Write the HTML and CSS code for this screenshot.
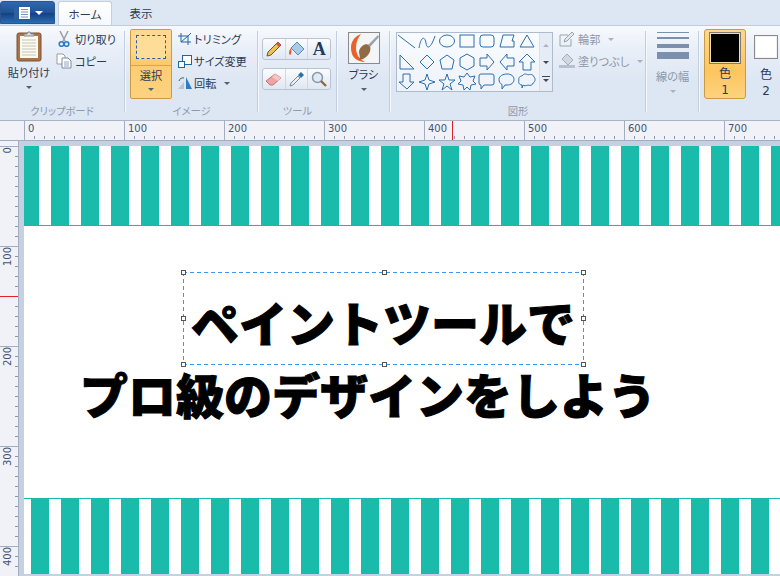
FILE: index.html
```html
<!DOCTYPE html>
<html lang="ja">
<head>
    <meta charset="UTF-8">
    <title>ペイント</title>
    <link rel="stylesheet" href="styles.css">
</head>
<body>
    <div class="tabs">
        <div class="app-button">
            <svg width="16" height="12" viewBox="0 0 16 12"><rect width="16" height="12" fill="#fff"/><rect x="0" y="0" width="5" height="12" fill="#2f5f9f"/><path d="M7 2.5h7M7 5h7M7 7.5h7M7 10h7" stroke="#7a93b8"/></svg>
            <span class="arrow white"></span>
        </div>
        <div class="tab active">ホーム</div>
        <div class="tab">表示</div>
    </div>

    <div class="ribbon">
        <div class="group g-clip">
            <div class="group-body">
                <div class="large paste">
                    <svg class="large-icon" width="32" height="32" viewBox="0 0 32 32">
                        <rect x="4" y="3" width="24" height="28" rx="2" fill="#a9744a" stroke="#7d5230"/>
                        <rect x="7" y="6" width="18" height="22" fill="#fdfaf0"/>
                        <path d="M9 10h14M9 13h14M9 16h14M9 19h14M9 22h14M9 25h14" stroke="#c4c4bc"/>
                        <path d="M11 6V4h3l1-2h2l1 2h3v2z" fill="#d9dde2" stroke="#808890"/>
                    </svg>
                    <span class="label">貼り付け</span>
                    <span class="arrow"></span>
                </div>
                <div class="small-col clip-col">
                    <div class="small-row">
                        <svg class="icon" width="16" height="16" viewBox="0 0 16 16"><path d="M4 0l5 10M12 0L7 10" stroke="#9aa3ad" stroke-width="1.6" fill="none"/><circle cx="5.500" cy="13" r="2.300" fill="none" stroke="#2b7cc4" stroke-width="1.600"/><circle cx="10.500" cy="13" r="2.300" fill="none" stroke="#2b7cc4" stroke-width="1.600"/></svg>
                        <span>切り取り</span>
                    </div>
                    <div class="small-row">
                        <svg class="icon" width="16" height="16" viewBox="0 0 16 16"><path d="M1 1h6l2 2v8H1z" fill="#fff" stroke="#9a9a9a"/><path d="M6 5h6l3 3v7H6z" fill="#fff" stroke="#7c8a9c"/><path d="M8 9h5M8 11h5M8 13h5" stroke="#8fa6c0"/></svg>
                        <span>コピー</span>
                    </div>
                </div>
            </div>
            <div class="group-label">クリップボード</div>
        </div>
        <div class="sep"></div>

        <div class="group g-image">
            <div class="group-body">
                <div class="large select-button">
                    <div class="select-top"><div class="dash-rect"></div></div>
                    <span class="label">選択</span>
                    <span class="arrow"></span>
                </div>
                <div class="small-col image-col">
                    <div class="small-row">
                        <svg class="icon" width="16" height="16" viewBox="0 0 16 16"><path d="M1 5h10v9M4 2v9h10M11 5l3-3M4 11l7-6" fill="none" stroke="#2463a6"/></svg>
                        <span>トリミング</span>
                    </div>
                    <div class="small-row">
                        <svg class="icon" width="16" height="16" viewBox="0 0 16 16"><rect x="5.500" y="2.500" width="9" height="9" fill="#fff" stroke="#2463a6"/><rect x="1.500" y="8.500" width="6" height="6" fill="#fff" stroke="#2463a6"/></svg>
                        <span>サイズ変更</span>
                    </div>
                    <div class="small-row">
                        <svg class="icon" width="16" height="16" viewBox="0 0 16 16"><path d="M1 14l6-7v7z" fill="#bcc3cc"/><path d="M9 14V2l6 12z" fill="#2f7cc4"/><path d="M2 6a4 4 0 0 1 5-3" fill="none" stroke="#2f6a3a"/></svg>
                        <span>回転</span>
                        <span class="arrow inline-arrow"></span>
                    </div>
                </div>
            </div>
            <div class="group-label">イメージ</div>
        </div>
        <div class="sep"></div>

        <div class="group g-tools">
            <div class="group-body">
                <div class="tool-grid">
                    <div class="tool-row">
                        <div class="tool"><svg width="18" height="18" viewBox="0 0 18 18"><path d="M3 12L13 2l3 3L6 15l-4 1z" fill="#f2c04c" stroke="#6a5a3a"/><path d="M13 2l3 3-2 2-3-3z" fill="#d9534f"/></svg></div>
                        <div class="tool"><svg width="18" height="18" viewBox="0 0 18 18"><path d="M9 2l7 7-6 6-7-7z" fill="#a8cbe8" stroke="#5b8ab5"/><path d="M3 8C0 11 1 15 2 15s2-3 1-7z" fill="#e8602c"/></svg></div>
                        <div class="tool"><span class="tool-a">A</span></div>
                    </div>
                    <div class="tool-row">
                        <div class="tool"><svg width="18" height="18" viewBox="0 0 18 18"><path d="M1 11l9-7 6 4-8 7H5z" fill="#f0a3a0" stroke="#b77a78"/><path d="M10 4l6 4-3 3-6-4z" fill="#f7c6c4"/></svg></div>
                        <div class="tool"><svg width="18" height="18" viewBox="0 0 18 18"><path d="M2 16l1-3 7-7 2 2-7 7z" fill="#e9eef4" stroke="#7d8a99"/><path d="M10 5l3-3 3 3-3 3z" fill="#2b6ea8"/></svg></div>
                        <div class="tool"><svg width="18" height="18" viewBox="0 0 18 18"><circle cx="7.500" cy="7.500" r="5" fill="#dfeaf4" stroke="#8a98a8" stroke-width="1.500"/><path d="M11 11l5 5" stroke="#8a6a48" stroke-width="2.400"/></svg></div>
                    </div>
                </div>
            </div>
            <div class="group-label">ツール</div>
        </div>
        <div class="sep"></div>

        <div class="group g-brush">
            <div class="group-body">
                <div class="large brush">
                    <svg class="large-icon brush-icon" width="32" height="32" viewBox="0 0 32 32">
                        <rect x="0.500" y="0.500" width="31" height="31" fill="#f4f5f6" stroke="#8a8a8a"/>
                        <path d="M13 2C5 5 1 12 4 22c2 6 9 8 13 8-6-3-9-8-9-14 0-6 2-10 5-14z" fill="#e8622a"/>
                        <path d="M11 19c2-6 7-8 10-6 3 3 1 9-3 12-2 2-5 3-7 3 2-2 0-5 0-9z" fill="#8f6a44"/>
                        <path d="M20 13L30 3l1 2-9 10z" fill="#9aa2ac"/>
                    </svg>
                    <span class="label">ブラシ</span>
                    <span class="arrow"></span>
                </div>
            </div>
        </div>
        <div class="sep"></div>

        <div class="group g-shapes">
            <div class="group-body">
                <div class="gallery">
                    <svg class="shape-list" width="142" height="58" viewBox="0 0 142 58">
                        <g fill="none" stroke="#2a6fae">
                            <path d="M1 2l17 13"/>
                            <path d="M22 15c2-12 6-12 7-5s5 5 9-7"/>
                            <ellipse cx="50" cy="8" rx="7.500" ry="6"/>
                            <rect x="63" y="2" width="14" height="12"/>
                            <rect x="83" y="2" width="14" height="12" rx="3"/>
                            <path d="M103 14l3-12h11l-2 6h2v6z"/>
                            <path d="M130 2l7 12h-14z"/>

                            <path d="M3 22l14 14H3z"/>
                            <path d="M30 22l7 7-7 7-7-7z"/>
                            <path d="M50 22l7 5-2 9H45l-2-9z"/>
                            <path d="M70 21l7 4v8l-7 4-7-4v-8z"/>
                            <path d="M83 25h7v-4l7 8-7 8v-4h-7z"/>
                            <path d="M117 25h-7v-4l-7 8 7 8v-4h7z"/>
                            <path d="M126 37v-8h-4l8-8 8 8h-4v8z"/>
                        </g>
                        <g fill="none" stroke="#2a6fae" transform="translate(0,-1)">
                            <path d="M6 42v8H2l8 7 7-7h-4v-8z"/>
                            <path d="M30 42l2 6 6 2-6 2-2 6-2-6-6-2 6-2z"/>
                            <path d="M50 42l2 6h6l-5 4 2 6-5-4-5 4 2-6-5-4h6z"/>
                            <path d="M70 41l3 4 5-1-2 5 3 3-5 1-1 5-3-3-3 3-1-5-5-1 3-3-2-5 5 1z"/>
                            <path d="M85 42h10a2 2 0 0 1 2 2v7a2 2 0 0 1-2 2h-8l-3 4v-4a2 2 0 0 1-2-2v-7a2 2 0 0 1 2-2z"/>
                            <path d="M110 42c4 0 7 2 7 5.500s-3 5.500-7 5.500h-2l-3 4v-4.500c-2-1-3-3-3-5 0-3.500 4-5.500 8-5.500z"/>
                            <path d="M125 44c2-3 5-2 6-1 2-1 5-1 6 2 2 2 1 5-1 6 0 2-3 3-5 2-2 1-4 1-5 0l-1 3v-3c-3 0-4-3-3-5-1-2 1-4 3-4z"/>
                        </g>
                    </svg>
                    <div class="gallery-scroll">
                        <span class="arrow up"></span>
                        <span class="arrow dark"></span>
                        <span class="arrow dark lined"></span>
                    </div>
                </div>
                <div class="small-col shape-col">
                    <div class="small-row muted">
                        <svg class="icon" width="16" height="16" viewBox="0 0 16 16"><path d="M1 4h8M1 4v11h11V8" fill="none" stroke="#9aa3b0"/><path d="M5 11l1-3 7-7 2 2-7 7z" fill="#e4e7ec" stroke="#9aa3b0"/></svg>
                        <span>輪郭</span>
                        <span class="arrow inline-arrow pale"></span>
                    </div>
                    <div class="small-row muted">
                        <svg class="icon" width="16" height="16" viewBox="0 0 16 16"><path d="M8 1l6 6-5 5-6-6z" fill="#d2d8e0" stroke="#a4acb8"/><path d="M0 12h16v3H0z" fill="#b8c0cc"/></svg>
                        <span>塗りつぶし</span>
                        <span class="arrow inline-arrow pale"></span>
                    </div>
                </div>
            </div>
            <div class="group-label">図形</div>
        </div>
        <div class="sep"></div>

        <div class="group g-size">
            <div class="group-body">
                <div class="large muted">
                    <div class="size-lines">
                        <i class="w1"></i>
                        <i class="w2"></i>
                        <i class="w4"></i>
                        <i class="w7"></i>
                    </div>
                    <span class="label">線の幅</span>
                    <span class="arrow pale"></span>
                </div>
            </div>
        </div>
        <div class="sep"></div>

        <div class="group g-color">
            <div class="group-body">
                <div class="large color-button on">
                    <div class="swatch black"></div>
                    <span class="label">色</span>
                    <span class="label num">1</span>
                </div>
                <div class="large color-button off">
                    <div class="swatch white"></div>
                    <span class="label">色</span>
                    <span class="label num">2</span>
                </div>
            </div>
        </div>
    </div>

    <div class="ruler-h">
        <span>0</span><span>100</span><span>200</span><span>300</span><span>400</span><span>500</span><span>600</span><span>700</span>
        <div class="mark-h"></div>
    </div>

    <div class="work">
        <div class="ruler-v">
            <span><b>0</b></span><span><b>100</b></span><span><b>200</b></span><span><b>300</b></span><span><b>400</b></span>
            <div class="mark-v"></div>
        </div>
        <div class="canvas-area">
            <div class="canvas">
                <div class="band band-top"></div>
                <div class="paper">
                    <div class="big line-one">ペイントツールで</div>
                    <div class="big line-two">プロ級のデザインをしよう</div>
                    <div class="selection">
                        <i class="handle h-tl"></i><i class="handle h-tm"></i><i class="handle h-tr"></i>
                        <i class="handle h-ml"></i><i class="handle h-mr"></i>
                        <i class="handle h-bl"></i><i class="handle h-bm"></i><i class="handle h-br"></i>
                    </div>
                </div>
                <div class="band band-bottom"></div>
            </div>
        </div>
    </div>
</body>
</html>
```

FILE: styles.css
```css
* {
    box-sizing: border-box;
}
body {
    margin: 0;
    width: 780px;
    height: 576px;
    overflow: hidden;
    background: #dfe7f3;
    color: #2c3a55;
    font-family: "Noto Sans CJK JP", "Noto Sans", sans-serif;
    font-size: 11.2px;
    font-feature-settings: "palt";
}

/* tabs */
.tabs {
    height: 25px;
    display: flex;
    align-items: flex-end;
    background: #dde6f3;
}
.app-button {
    width: 55px;
    height: 23px;
    margin-bottom: 1px;
    display: flex;
    align-items: center;
    justify-content: center;
    gap: 5px;
    padding-left: 2px;
    border: 1px solid #2b5590;
    border-radius: 3px 3px 0 0;
    background: linear-gradient(#2f68ad 0, #1f5396 50%, #13407f 52%, #2a6cb4 100%);
}
.tab {
    height: 24px;
    width: 44px;
    line-height: 24px;
    text-align: center;
    font-size: 11.5px;
}
.tab.active {
    width: 54px;
    margin-left: 3px;
    margin-right: 7px;
    border: 1px solid #c3d0e2;
    border-bottom: 0;
    border-radius: 3px 3px 0 0;
    background: linear-gradient(#fff, #f5f8fd);
}

/* ribbon */
.ribbon {
    height: 96px;
    display: flex;
    border-top: 1px solid #bccce2;
    border-bottom: 1px solid #a9b4c6;
    background: linear-gradient(#f7f9fd 0, #e9eff8 25%, #dde6f3 60%, #dde6f3 100%);
}
.group {
    position: relative;
    padding-top: 2px;
}
.g-clip { width: 124px; padding-left: 9px; }
.g-image { width: 131px; padding-left: 4px; }
.g-tools { width: 77px; padding-left: 3px; }
.g-brush { width: 51px; }
.g-shapes { width: 254px; padding-left: 5px; }
.g-size { width: 51px; }
.g-color { width: 80px; padding-left: 4px; }
.group-body {
    display: flex;
    height: 74px;
}
.group-label {
    position: absolute;
    left: 0;
    right: 0;
    bottom: 1px;
    height: 16px;
    line-height: 16px;
    text-align: center;
    font-size: 10.3px;
    color: #8d99ad;
}
.sep {
    width: 2px;
    height: 81px;
    margin-top: 5px;
    background: #c3cfdf;
    border-right: 1px solid #f4f7fb;
}
.large {
    display: flex;
    flex: none;
    flex-direction: column;
    align-items: center;
    width: 40px;
}
.large-icon {
    margin-top: 2px;
    flex: none;
}
.label {
    height: 18px;
    line-height: 18px;
    margin-top: 1px;
    white-space: nowrap;
}
.arrow {
    display: block;
    width: 0;
    height: 0;
    margin-top: 5px;
    border-left: 3px solid transparent;
    border-right: 3px solid transparent;
    border-top: 3px solid #55606f;
}
.arrow.white {
    margin: 0;
    border-left-width: 4px;
    border-right-width: 4px;
    border-top: 4px solid #fff;
}
.arrow.pale {
    border-top-color: #aab2bf;
}
.arrow.dark {
    border-top-color: #3d4758;
}
.arrow.up {
    border-top: 0;
    border-bottom: 3px solid #aab2bf;
}
.arrow.lined {
    position: relative;
}
.arrow.lined::before {
    content: "";
    position: absolute;
    left: -4px;
    top: -6px;
    width: 8px;
    height: 1px;
    background: #3d4758;
}
.inline-arrow {
    margin: 0 0 0 8px;
}
.small-col {
    display: flex;
    flex-direction: column;
}
.small-row {
    height: 22px;
    display: flex;
    align-items: center;
    white-space: nowrap;
}
.icon {
    flex: none;
}
.clip-col { margin-left: 7px; }
.clip-col .icon { margin-right: 3px; }
.image-col { margin-left: 5px; }
.image-col .icon { margin-right: 1px; }
.shape-col { margin-left: 6px; }
.shape-col .icon { margin-right: 3px; }
.muted {
    color: #8d97a8;
}

/* select button */
.select-button {
    width: 42px;
    height: 70px;
    margin-top: 1px;
    border: 1px solid #c89b45;
    border-radius: 2px;
    background: linear-gradient(#fdc766, #fdd27f);
}
.select-top {
    width: 100%;
    height: 36px;
    padding: 5px 5px 0;
    background: linear-gradient(#fdd88e 0, #fdd88e 60%, #fdc868 100%);
    border-bottom: 1px solid #d8a54c;
}
.dash-rect {
    height: 24px;
    border: 1px dashed #2a5fa5;
    background: #fedd99;
}
.select-button .label {
    margin-top: 0;
}
.select-button .arrow {
    margin-top: 4px;
}

/* tools */
.tool-grid {
    margin-top: 10px;
    display: flex;
    flex-direction: column;
    gap: 8px;
}
.tool-row {
    display: flex;
    width: 69px;
    height: 22px;
    border: 1px solid #b9c4d3;
    border-radius: 3px;
    background: linear-gradient(#fbfcfe, #dfe7f2);
}
.tool {
    flex: 1;
    display: flex;
    align-items: center;
    justify-content: center;
    border-right: 1px solid #cfd8e4;
}
.tool:last-child {
    border-right: 0;
}
.tool-a {
    font-family: "Liberation Serif", serif;
    font-size: 18px;
    font-weight: bold;
    line-height: 18px;
    color: #1f3a62;
}

/* brush */
.brush {
    width: 100%;
}
.brush-icon {
    margin-top: 4px;
}

/* shapes */
.gallery {
    display: flex;
    flex: none;
    width: 157px;
    height: 60px;
    margin-top: 4px;
    border: 1px solid #aebbcd;
    background: linear-gradient(#f9fbfe, #eef3fa);
}
.shape-list {
    flex: none;
}
.gallery-scroll {
    flex: 1;
    display: flex;
    flex-direction: column;
    align-items: center;
    justify-content: space-around;
    padding: 4px 0 2px;
    background: #e6ecf5;
    border-left: 1px solid #d7dfeb;
}
.gallery-scroll .arrow {
    margin: 0;
}

/* line width */
.g-size .large {
    width: 100%;
}
.size-lines {
    width: 32px;
    height: 34px;
    margin-top: 4px;
    display: flex;
    flex-direction: column;
    flex: none;
}
.size-lines i {
    display: block;
    background: #7c8fad;
}
.size-lines .w1 { height: 1px; }
.size-lines .w2 { height: 2px; margin-top: 4px; }
.size-lines .w4 { height: 4px; margin-top: 5px; }
.size-lines .w7 { height: 7px; margin-top: 4px; }

/* colours */
.color-button {
    height: 70px;
    margin-top: 1px;
    border: 1px solid transparent;
    border-radius: 3px;
}
.color-button.on {
    width: 42px;
    border-color: #c89b45;
    background: linear-gradient(#fdd88e, #fdc55f 60%, #fdd27f);
}
.color-button.off {
    width: 28px;
    margin-left: 6px;
    border: 0;
}
.swatch {
    flex: none;
    margin-top: 6px;
    width: 24px;
    height: 24px;
    border: 1px solid #8a8a8a;
}
.swatch.white {
    margin-bottom: 6px;
    background: #fff;
    box-shadow: inset 0 0 0 1px #f0f0f0;
}
.swatch.black {
    width: 32px;
    height: 32px;
    margin-top: 2px;
    background: #000;
    border: 1px solid #7f7a70;
    box-shadow: inset 0 0 0 1px #f6dca8;
}
.color-button .label {
    height: 16px;
    line-height: 16px;
    margin-top: 1px;
    font-size: 12px;
}
.color-button .num {
    font-family: "DejaVu Sans", sans-serif;
}

/* rulers */
.ruler-h {
    position: relative;
    height: 20px;
    display: flex;
    overflow: hidden;
    padding-left: 24px;
    border-bottom: 1px solid #a2adc2;
    background: #f0f2f8;
    font-family: "DejaVu Sans", sans-serif;
    font-size: 10px;
    color: #465273;
}
.ruler-h span {
    flex: none;
    width: 100px;
    padding: 2px 0 0 3px;
    border-left: 1px solid #a2adc2;
    background: linear-gradient(90deg, #8b97ae 1px, transparent 1px) 9px 15px / 10px 3px repeat-x;
}
.mark-h {
    position: absolute;
    left: 452px;
    top: 0;
    width: 1px;
    height: 19px;
    background: #d8202a;
}
.work {
    display: flex;
    height: 435px;
    overflow: hidden;
}
.ruler-v {
    position: relative;
    flex: none;
    width: 19px;
    padding-top: 5px;
    overflow: hidden;
    border-right: 1px solid #a2adc2;
    background: #f0f2f8;
    font-family: "DejaVu Sans", sans-serif;
    font-size: 10px;
    color: #465273;
}
.ruler-v span {
    display: block;
    height: 100px;
    border-top: 1px solid #a2adc2;
    background: linear-gradient(#8b97ae 1px, transparent 1px) 15px 9px / 3px 10px repeat-y;
}
.ruler-v b {
    display: block;
    width: 14px;
    margin-left: 1px;
    padding-top: 2px;
    font-weight: normal;
    line-height: 14px;
    writing-mode: vertical-rl;
    transform: rotate(180deg);
}
.mark-v {
    position: absolute;
    left: 0;
    top: 155px;
    width: 18px;
    height: 1px;
    background: #e0202a;
}
.canvas-area {
    flex: 1;
    min-width: 0;
    padding: 5px 0 0 5px;
    background: #c6d0e3;
    overflow: hidden;
}
.canvas {
    width: 756px;
    height: 428px;
    display: flex;
    flex-direction: column;
    background: #fff;
}

/* canvas picture */
.band {
    flex: none;
}
.band-top {
    height: 80px;
    border-bottom: 1px solid #1abbab;
    background: repeating-linear-gradient(90deg, #1abbab 0 15px, #fff 15px 27px, #1abbab 27px 30px);
}
.band-bottom {
    height: 76px;
    border-top: 1px solid #1abbab;
    background: repeating-linear-gradient(90deg, #fff 0 7px, #1abbab 7px 25px, #fff 25px 30px);
}
.paper {
    position: relative;
    flex: 1;
    padding-top: 59px;
    background: #fff;
}
.big {
    height: 72px;
    line-height: 72px;
    font-size: 48px;
    font-weight: 900;
    color: #000;
    white-space: nowrap;
    font-feature-settings: normal;
    -webkit-text-stroke: 1px #000;
}
.line-one {
    margin-left: 167px;
}
.line-two {
    margin-left: 56px;
}
.selection {
    position: absolute;
    left: 159px;
    top: 46px;
    width: 401px;
    height: 93px;
    background:
        repeating-linear-gradient(90deg, #3c96ee 0 4px, transparent 4px 7px) 0 0 / 100% 1px no-repeat,
        repeating-linear-gradient(90deg, #3c96ee 0 4px, transparent 4px 7px) 0 100% / 100% 1px no-repeat,
        repeating-linear-gradient(#3c96ee 0 4px, transparent 4px 7px) 0 0 / 1px 100% no-repeat,
        repeating-linear-gradient(#3c96ee 0 4px, transparent 4px 7px) 100% 0 / 1px 100% no-repeat;
}
.handle {
    position: absolute;
    width: 5px;
    height: 5px;
    border: 1px solid #555;
    background: #fff;
}
.h-tl { left: -2px; top: -2px; }
.h-tm { left: 199px; top: -2px; }
.h-tr { right: -2px; top: -2px; }
.h-ml { left: -2px; top: 44px; }
.h-mr { right: -2px; top: 44px; }
.h-bl { left: -2px; bottom: -2px; }
.h-bm { left: 199px; bottom: -2px; }
.h-br { right: -2px; bottom: -2px; }
```
